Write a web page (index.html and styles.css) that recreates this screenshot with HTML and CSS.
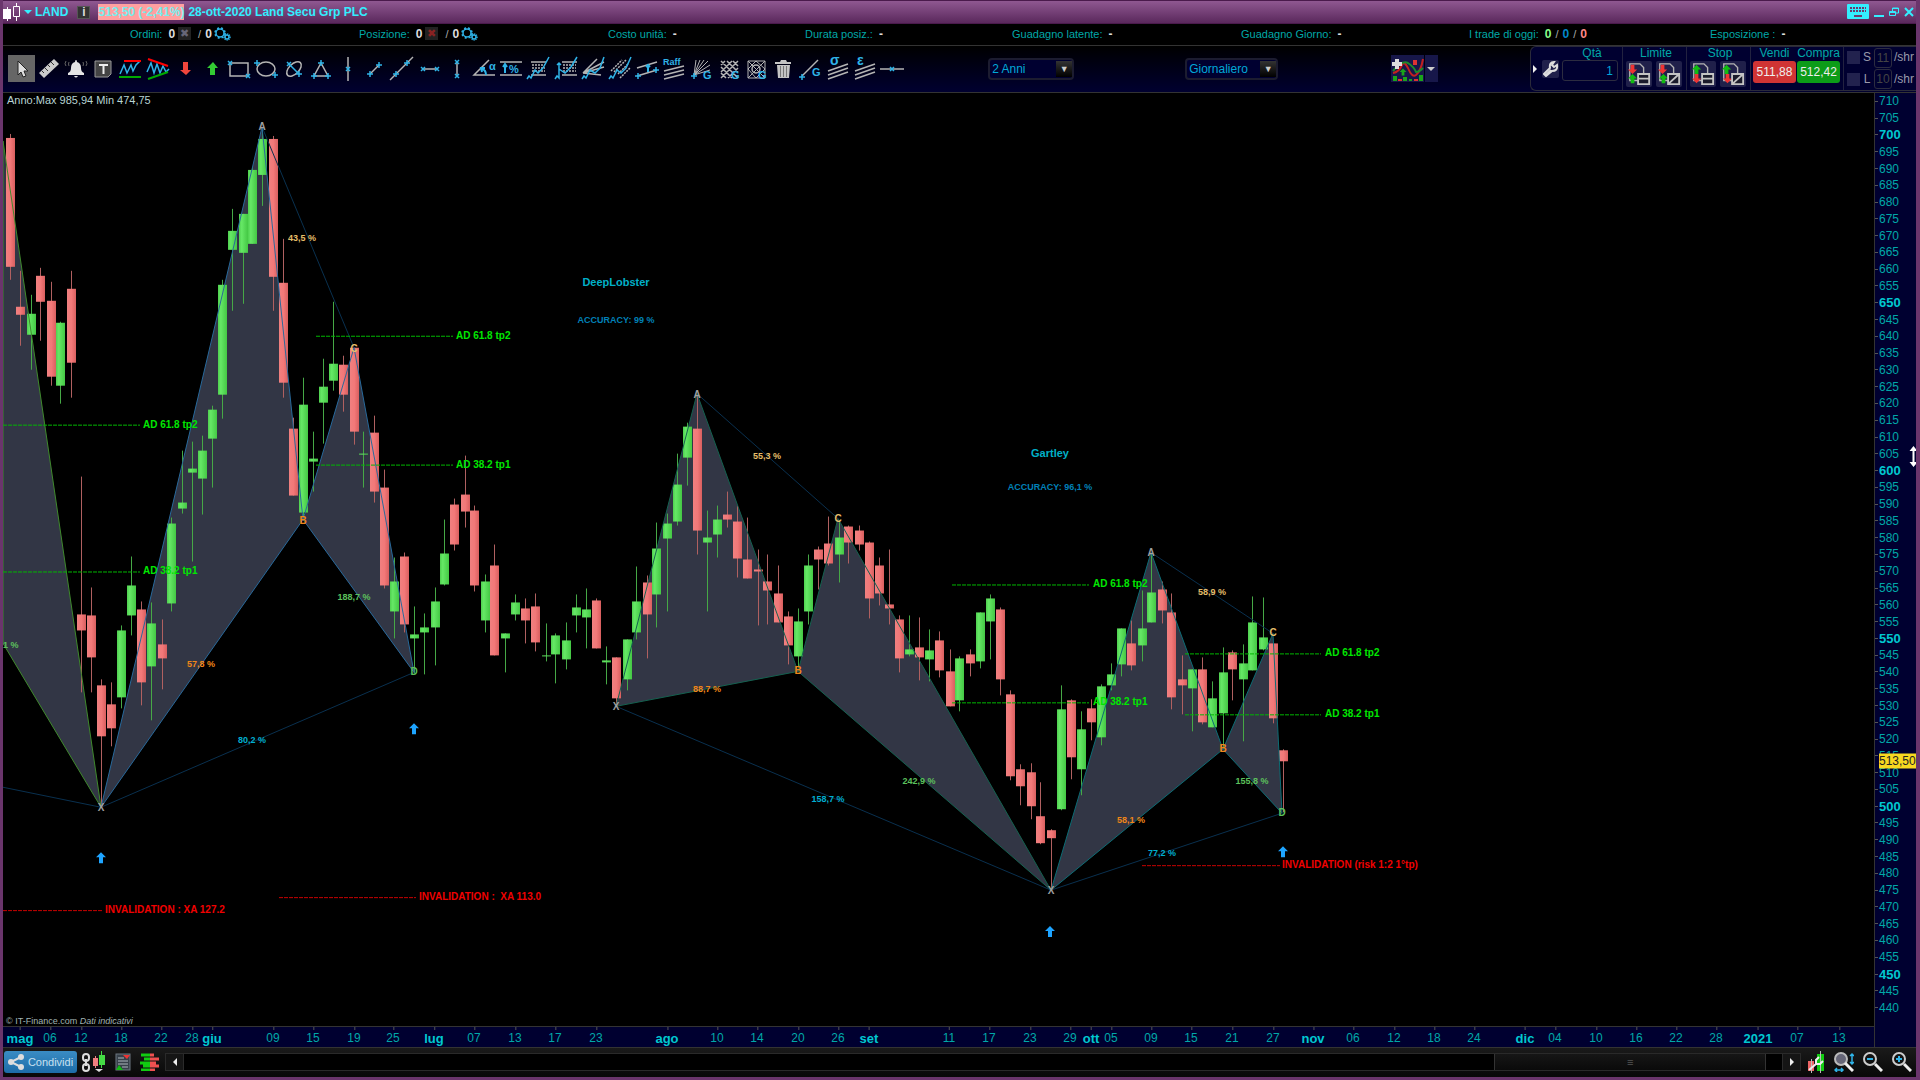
FILE: index.html
```html
<!DOCTYPE html>
<html lang="it">
<head>
    <meta charset="UTF-8">
    <meta name="viewport" content="width=device-width, initial-scale=1.0">
    <title>LAND - Land Secu Grp PLC</title>
    <link rel="stylesheet" href="styles.css">
</head>
<body>
    <!-- shared icon parts -->
    <svg class="defs" width="0" height="0" aria-hidden="true">
        <defs>
            <path id="plus" class="b" d="M-3 0h6M0-3v6"/>
            <path id="cross" class="b" d="M-2-2l4 4M2-2l-4 4"/>
            <path id="up" d="M0-5l5 5h-3v5h-4v-5h-3z"/>
            <path id="down" d="M0 5l5-5h-3v-5h-4v5h-3z"/>
            <g id="gears" class="b">
                <circle cx="6" cy="6" r="4"/>
                <circle cx="6" cy="6" r="5" stroke-dasharray="2 2"/>
                <circle cx="13" cy="10" r="2"/>
                <circle cx="13" cy="10" r="3" stroke-dasharray="1 1"/>
            </g>
            <g id="sheet">
                <path class="w" d="M3 2h11l4 4v14h-15z"/>
            </g>
        </defs>
    </svg>

    <header class="title-bar">
        <svg class="candle-logo" viewBox="0 0 18 18"><path fill="#fff" d="M0 6h8v10h-8zM4 4h1v14h-1z"/><path fill="none" stroke="#fff" d="M10.500 3.500h6v10h-6zM13.500 0v3M13.500 14v4"/></svg>
        <button class="symbol-menu"><i class="caret cyan"></i>LAND</button>
        <button class="info-btn" aria-label="Info">i</button>
        <span class="quote">513,50 (-2,41%)</span>
        <h1>28-ott-2020 Land Secu Grp PLC</h1>
        <div class="window-btns">
            <button aria-label="Tastiera"><svg width="22" height="16" viewBox="0 0 22 16"><rect width="22" height="15" rx="1" fill="#3ef"/><path stroke="#6b3a6e" stroke-width="2" stroke-dasharray="2 1" d="M3 4h16M3 7h16"/><path stroke="#6b3a6e" stroke-width="2" d="M7 12h8"/></svg></button>
            <button aria-label="Riduci"><svg width="10" height="12" viewBox="0 0 10 12"><path stroke="#3ef" stroke-width="2" d="M0 10h10"/></svg></button>
            <button aria-label="Ripristina"><svg width="10" height="12" viewBox="0 0 10 12"><path fill="none" stroke="#3ef" d="M3.500 5v-3h6v5h-3M.5 5.500h6v4h-6zM3 2.500h7M0 6.500h7"/></svg></button>
            <button aria-label="Chiudi"><svg width="10" height="12" viewBox="0 0 10 12"><path stroke="#3ef" stroke-width="2" d="M1 2l8 8M9 2l-8 8"/></svg></button>
        </div>
    </header>

    <section class="info-row">
        <div>Ordini: <b>0</b><button class="cancel" aria-label="Annulla ordini">✖</button> <em>/</em> <b>0</b><svg width="17" height="14"><use href="#gears"/></svg></div>
        <div>Posizione: <b>0</b><button class="cancel red" aria-label="Chiudi posizione">✖</button> <em>/</em> <b>0</b><svg width="17" height="14"><use href="#gears"/></svg></div>
        <div>Costo unità: <b>-</b></div>
        <div>Durata posiz.: <b>-</b></div>
        <div>Guadagno latente: <b>-</b></div>
        <div>Guadagno Giorno: <b>-</b></div>
        <div>I trade di oggi: <b class="win">0</b> <em>/</em> <b class="even">0</b> <em>/</em> <b class="lose">0</b></div>
        <div>Esposizione : <b>-</b></div>
    </section>

    <nav class="toolbar">
        <div class="tools">
            <button class="active" aria-label="Selezione"><svg viewBox="0 0 24 24"><path fill="#ddd" stroke="#222" d="M8 4v14l3-3 2 5 3-1-2-5h4z"/></svg></button>
            <button aria-label="Righello"><svg viewBox="0 0 24 24"><path fill="#ccc" d="M2 16l15-14 5 5-15 14z"/><path stroke="#333" d="M5 14l2 2M8 11l3 3M11 8l2 2M14 5l3 3"/></svg></button>
            <button aria-label="Allarme"><svg viewBox="0 0 24 24"><path fill="#e4e4e4" d="M12 3q1 0 1 2 4 1 4 6 0 4 3 5v2h-16v-2q3-1 3-5 0-5 4-6 0-2 1-2zM10 19h4q-2 3-4 0"/><path class="w thin dim" d="M5 5q-1 2 0 4M2 4q-2 3 0 5M19 5q1 2 0 4M22 4q2 3 0 5"/></svg></button>
            <button aria-label="Testo"><svg viewBox="0 0 24 24"><path fill="#444" stroke="#999" d="M4 4h16v13l-3 3h-13z"/><path stroke="#eee" stroke-width="2" fill="none" d="M8 8h9M12.500 8v9"/></svg></button>
            <button aria-label="Supporti"><svg viewBox="0 0 24 24"><path class="b" d="M2 17l4-9 3 8 4-8 2 6 3-6 4-4"/><path stroke="#f00" stroke-width="2" d="M6 4h17"/><path stroke="#0a0" stroke-width="2" d="M1 20h22"/></svg></button>
            <button aria-label="Canale"><svg viewBox="0 0 24 24"><path class="b" d="M1 15l4-9 3 10 3-9 3 9 3-7 3 6 3-3"/><path stroke="#f00" stroke-width="2" d="M2 2l20 7"/><path stroke="#0a0" stroke-width="2" d="M2 22l20-7"/></svg></button>
            <button aria-label="Freccia giù"><svg viewBox="0 0 24 24"><path fill="#f0453c" d="M10 5h5v8h3l-5 5-6-5h3z"/></svg></button>
            <button aria-label="Freccia su"><svg viewBox="0 0 24 24"><path fill="#3c3" d="M10 18h5v-7h3l-5-6-6 6h3z"/></svg></button>
            <button aria-label="Rettangolo"><svg viewBox="0 0 24 24"><path class="w" d="M3 6h18v13h-18z"/><use href="#cross" x="3" y="6"/><use href="#cross" x="21" y="19"/></svg></button>
            <button aria-label="Ellisse"><svg viewBox="0 0 24 24"><ellipse class="w" cx="12" cy="12" rx="9" ry="7"/><use href="#plus" x="3" y="6"/><use href="#plus" x="21" y="18"/></svg></button>
            <button aria-label="Ellisse inclinata"><svg viewBox="0 0 24 24"><ellipse class="w" cx="12" cy="12" rx="9" ry="5" transform="rotate(-45 12 12)"/><path class="b" d="M7 7l10 10"/><use href="#cross" x="7" y="7"/><use href="#plus" x="17" y="17"/></svg></button>
            <button aria-label="Triangolo"><svg viewBox="0 0 24 24"><path class="w" d="M12 6l7 13h-14z"/><use href="#plus" x="12" y="6"/><use href="#plus" x="5" y="19"/><use href="#plus" x="19" y="19"/></svg></button>
            <button aria-label="Verticale"><svg viewBox="0 0 24 24"><path class="w" d="M12 0v24"/><use href="#cross" x="12" y="12"/></svg></button>
            <button aria-label="Segmento"><svg viewBox="0 0 24 24"><path class="w" d="M7 17l9-9"/><use href="#plus" x="7" y="17"/><use href="#plus" x="16" y="8"/></svg></button>
            <button aria-label="Retta"><svg viewBox="0 0 24 24"><path class="w" d="M0 23l23-23"/><use href="#plus" x="6" y="17"/><use href="#plus" x="17" y="6"/></svg></button>
            <button aria-label="Segmento orizzontale"><svg viewBox="0 0 24 24"><path class="w" d="M5 12h14"/><use href="#cross" x="5" y="12"/><use href="#cross" x="19" y="12"/></svg></button>
            <button aria-label="Segmento verticale"><svg viewBox="0 0 24 24"><path class="w" d="M12 5v14"/><use href="#cross" x="12" y="5"/><use href="#cross" x="12" y="19"/></svg></button>
            <button aria-label="Angolo"><svg viewBox="0 0 24 24"><path class="w" d="M17 3l-15 15h21"/><path class="b bold" d="M14 18q0-5-4-6M10 15l-1-4 4 0"/><text x="17" y="13">α</text></svg></button>
            <button aria-label="Variazione %"><svg viewBox="0 0 24 24"><path class="w" d="M1 5h22M1 18h22"/><path class="b bold" d="M6 16v-8M4 10l2-3 2 3"/><text x="10" y="16">%</text></svg></button>
            <button aria-label="Ritracciamenti"><svg viewBox="0 0 24 24"><path class="w dots" d="M6 8h13M6 11h13M6 14h13"/><path class="w" d="M5 5h15M5 18h15"/><path class="b" d="M1 22l2-3 2 2 4-8 3 3 5-5 6-11"/></svg></button>
            <button aria-label="Estensioni"><svg viewBox="0 0 24 24"><path class="w dots" d="M9 8h13M9 11h13M9 14h13"/><path class="w" d="M8 5h15M8 18h15"/><path class="b" d="M1 22l2-3 2 2v-14M3 8l2-2 2 2M5 12l6 4 6-6 6-10"/></svg></button>
            <button aria-label="Ventaglio"><svg viewBox="0 0 24 24"><path class="w" d="M2 16l14-14M2 16l21-11M2 16l21-6M2 16l18 2"/><path class="b" d="M1 22l2-3 2 2 4-8 5 3 5-5 4-11"/></svg></button>
            <button aria-label="Linee di velocità"><svg viewBox="0 0 24 24"><path class="w dots" d="M3 14l11-11M6 15l12-12M10 17l10-10M12 21l10-10"/><path class="b" d="M1 22l2-3 2 2 4-8 4 3 5-5 5-11"/></svg></button>
            <button aria-label="Canale parallelo"><svg viewBox="0 0 24 24"><path class="w" d="M2 11l20-6M2 19l20-6"/><path class="b bold" d="M13 15v-6M11 10l2-2 2 2"/><use href="#plus" x="3" y="19"/><use href="#plus" x="21" y="13"/></svg></button>
            <button aria-label="Raff"><svg viewBox="0 0 24 24"><path class="w" d="M2 14l20-5M2 18l20-5M2 22l20-5"/><text class="raff" x="1" y="8">Raff</text></svg></button>
            <button aria-label="Ventaglio di Gann"><svg viewBox="0 0 24 24"><path class="w thin" d="M4 18l2-15M4 18l6-15M4 18l10-15M4 18l14-14M4 18l16-10M4 18l16-5"/><use href="#plus" x="4" y="19"/><text x="13" y="22">G</text></svg></button>
            <button aria-label="Griglia di Gann"><svg viewBox="0 0 24 24"><path class="w" d="M4 8l4-4M4 15l11-11M4 21l17-17M11 21l10-10M4 16l5 5M4 10l11 11M4 4l17 17M10 4l11 11M16 4l5 5"/><text x="14" y="22">G</text></svg></button>
            <button aria-label="Quadrato di Gann"><svg viewBox="0 0 24 24"><path class="w thin" d="M4 4h17v17h-17zM4 4l17 17M21 4l-17 17M12 4l9 8-9 9-8-9z"/><circle class="w" cx="12" cy="12" r="4"/><text x="14" y="22">G</text></svg></button>
            <button aria-label="Elimina"><svg viewBox="0 0 24 24"><path fill="#c4c4c4" d="M6 8h13l-1 13h-11zM4 5h5l1-2h5l1 2h4v2h-16z"/><path stroke="#777" d="M9.500 9v11M12.500 9v11M15.500 9v11"/></svg></button>
            <button aria-label="Linea di Gann"><svg viewBox="0 0 24 24"><path class="w" d="M4 19l16-16"/><use href="#plus" x="4" y="20"/><text x="14" y="19">G</text></svg></button>
            <button aria-label="Deviazione standard"><svg viewBox="0 0 24 24"><path class="w" d="M2 14l20-7M2 18l20-7M2 22l20-7"/><text class="greek" x="4" y="8">σ</text></svg></button>
            <button aria-label="Errore standard"><svg viewBox="0 0 24 24"><path class="w" d="M2 14l20-7M2 18l20-7M2 22l20-7"/><text class="greek" x="4" y="8">ε</text></svg></button>
            <button aria-label="Orizzontale"><svg viewBox="0 0 24 24"><path class="w" d="M0 12h24"/><use href="#cross" x="12" y="12"/></svg></button>
        </div>

        <div class="period"><select aria-label="Periodo"><option>2 Anni</option></select></div>
        <div class="period wide"><select aria-label="Intervallo"><option>Giornaliero</option></select></div>

        <div class="indicators">
            <button aria-label="Indicatori"><svg width="33" height="26" viewBox="0 0 33 26"><path fill="none" stroke="#c32020" stroke-width="2" d="M2 17q6-1 9-8 2-5 6 3 4 10 8 7 5-4 7-16"/><path fill="none" stroke="#1b8a2b" stroke-width="2" d="M2 15q9-11 15-8 6 4 8 9 3 0 7-4"/><path stroke="#ddd" stroke-width="4" d="M1 8h10M6 3v10"/><g fill="#1aa51a"><use href="#up" transform="translate(12 16) scale(.7)"/><path d="M2 20h4v5h-4zM12 21h4v4h-4zM18 23h3v2h-3zM28 19h4v6h-4z"/></g><path fill="#d33" d="M22 4h4v5h-4zM7 23h4v2h-4zM23 23h4v2h-4z"/></svg></button>
            <button class="drop" aria-label="Altri indicatori"><i class="caret"></i></button>
        </div>

        <form class="trade-panel">
            <i class="collapse"></i>
            <button type="button" class="tile wrench" aria-label="Impostazioni"><svg width="16" height="16" viewBox="0 0 16 16"><path fill="none" stroke="#ddd" stroke-width="2" d="M2 15l6-6M14 4l-3 2-2-2 2-3q-5 0-4 6l-6 6 2 2 6-5q6 0 5-6z"/></svg></button>
            <div class="col qty">
                <label for="qty">Qtà</label>
                <input id="qty" type="text" value="1">
            </div>
            <div class="col orders">
                <span>Limite</span>
                <div>
                    <button type="button" class="tile" aria-label="Limite"><svg viewBox="0 0 26 26"><use href="#sheet"/><use href="#down" x="6" y="8" fill="#e33"/><use href="#up" x="6" y="18" fill="#1b1"/><path class="box" d="M12 13h12v5h-12zM12 18h12v6h-12z"/></svg></button>
                    <button type="button" class="tile" aria-label="Limite avanzato"><svg viewBox="0 0 26 26"><use href="#sheet"/><use href="#down" x="6" y="8" fill="#e33"/><use href="#up" x="7" y="18" fill="#1b1"/><path class="box" d="M12 13h12v11h-12zM12 24l12-11"/></svg></button>
                </div>
            </div>
            <div class="col orders">
                <span>Stop</span>
                <div>
                    <button type="button" class="tile" aria-label="Stop"><svg viewBox="0 0 26 26"><use href="#sheet"/><use href="#up" x="6" y="8" fill="#1b1"/><use href="#down" x="6" y="18" fill="#e33"/><path class="box" d="M12 13h12v5h-12zM12 18h12v6h-12z"/></svg></button>
                    <button type="button" class="tile" aria-label="Stop avanzato"><svg viewBox="0 0 26 26"><use href="#sheet"/><use href="#up" x="6" y="8" fill="#1b1"/><use href="#down" x="7" y="18" fill="#e33"/><path class="box" d="M12 13h12v11h-12zM12 24l12-11"/></svg></button>
                </div>
            </div>
            <div class="col market">
                <div><span>Vendi</span><span>Compra</span></div>
                <div><button type="button" class="sell">511,88</button><button type="button" class="buy">512,42</button></div>
            </div>
            <div class="col shr">
                <div><input type="checkbox" id="chk-s"><label for="chk-s">S</label><input type="text" value="11" aria-label="S per azione">/shr</div>
                <div><input type="checkbox" id="chk-l"><label for="chk-l">L</label><input type="text" value="10" aria-label="L per azione">/shr</div>
            </div>
        </form>
    </nav>

    <main class="chart">
        <div class="plot" id="plot">
            <svg id="canvas" viewBox="3 92 1871 934" preserveAspectRatio="none">
                <defs>
                    <linearGradient id="bull"><stop offset="0" stop-color="#4fd04f"/><stop offset=".3" stop-color="#66e866"/><stop offset="1" stop-color="#44c844"/></linearGradient>
                    <linearGradient id="bear"><stop offset="0" stop-color="#f08080"/><stop offset=".5" stop-color="#f27878"/><stop offset="1" stop-color="#d95f5f"/></linearGradient>
                </defs>
            </svg>
            <p class="range">Anno:Max 985,94 Min 474,75</p>
            <p class="credits">© IT-Finance.com <i>Dati indicativi</i></p>
        </div>
        <div class="price-axis" id="price-axis">
            <span class="last-price">513,50</span>
            <svg class="resize" width="9" height="21" viewBox="0 0 9 21"><path fill="#fff" d="M4.500 0l4 5h-3v11h3l-4 5-4-5h3v-11h-3z"/></svg>
        </div>
        <div class="time-axis" id="time-axis"></div>
    </main>

    <footer class="bottom-bar">
        <button class="share"><svg width="16" height="16" viewBox="0 0 16 16"><path fill="none" stroke="#ddd" stroke-width="2" d="M13 3l-10 5 10 5"/><circle cx="13" cy="3" r="3" fill="#ddd"/><circle cx="3" cy="8" r="3" fill="#ddd"/><circle cx="13" cy="13" r="3" fill="#ddd"/></svg>Condividi</button>
        <button aria-label="Collega grafici"><svg width="25" height="22" viewBox="0 0 25 22"><g fill="none" stroke="#ddd" stroke-width="2"><rect x="2" y="3" width="6" height="7" rx="3"/><rect x="2" y="13" width="6" height="7" rx="3"/><path d="M5 8v7"/></g><path fill="#f08080" d="M12 7h5v8h-5zM14 5h1v12h-1z"/><path fill="#4d4" d="M18 4h6v10h-6zM20 0h1v17h-1z"/><path fill="#ddd" d="M14 18h8l-4 3z"/></svg></button>
        <button aria-label="Notizie"><svg width="16" height="18" viewBox="0 0 16 18"><rect x="1" y="1" width="14" height="16" fill="#374049" stroke="#6d7680"/><path stroke="#aeb6bd" stroke-width="1" d="M3 5h6M3 8h10M3 11h10M7 14h6"/><path fill="#e33" d="M8 2h7l-3 4z"/><path fill="#1b1" d="M1 17h7l-4-5z"/></svg></button>
        <button aria-label="Book"><svg width="19" height="18" viewBox="0 0 19 18"><path stroke="#1c1" stroke-width="3" d="M1 2h9M4 6h6M0 10h10M3 13h7M1 17h9"/><path stroke="#f05050" stroke-width="3" d="M10 2h4M10 6h9M10 10h6M10 13h9M10 17h5"/></svg></button>
        <div class="scroll">
            <button aria-label="Scorri a sinistra"><i class="arrow-l"></i></button>
            <div class="track"><div class="thumb">≡</div></div>
            <button aria-label="Scorri a destra"><i class="arrow-r"></i></button>
        </div>
        <button aria-label="Impostazioni grafico"><svg width="18" height="22" viewBox="0 0 18 22"><path fill="#e66" d="M1 10h6v10h-6z"/><path fill="#1c1" d="M10 3h7v17h-7z"/><path stroke="#bbb" d="M13.500 0v22M4.500 8v14"/><path fill="none" stroke="#eee" stroke-width="2" d="M2 19l7-6M12 6l-3 3v4h4l3-3"/></svg></button>
        <button aria-label="Adatta"><svg width="20" height="20" viewBox="0 0 20 20"><circle cx="7" cy="7" r="6" fill="#667" stroke="#bbb" stroke-width="2"/><path stroke="#eee" stroke-width="3" d="M11 11l8 8"/><path class="b" d="M18 2v10M16 4l2-2 2 2M16 10l2 2 2-2M1 18h8M3 16l-2 2 2 2M7 16l2 2-2 2"/></svg></button>
        <button aria-label="Riduci zoom"><svg width="20" height="20" viewBox="0 0 20 20"><circle cx="7" cy="7" r="6" fill="none" stroke="#ccc" stroke-width="2"/><path stroke="#eee" stroke-width="3" d="M12 12l7 7"/><path class="b bold" d="M4 7h6"/></svg></button>
        <button aria-label="Aumenta zoom"><svg width="20" height="20" viewBox="0 0 20 20"><circle cx="7" cy="7" r="6" fill="none" stroke="#ccc" stroke-width="2"/><path stroke="#eee" stroke-width="3" d="M12 12l7 7"/><path class="b bold" d="M4 7h6M7 4v6"/></svg></button>
    </footer>

    <script src="chart.js"></script>
</body>
</html>
```
FILE: styles.css
```css
:root {
    --navy: #000030;
    --teal: #00a8a8;
    --cyan: #00c8d0;
    --blue: #2fb4e8;
    --line: #333;
}

* {
    margin: 0;
    padding: 0;
    box-sizing: border-box;
    font-family: "Liberation Sans", Arial, sans-serif;
}

body {
    height: 100vh;
    display: flex;
    flex-direction: column;
    background: #000;
    border: solid #6a356c;
    border-width: 0 4px 3px 3px;
    color: var(--teal);
    font-size: 11px;
    overflow: hidden;
}

button {
    background: none;
    border: 0;
    color: inherit;
    font-size: inherit;
    display: flex;
    align-items: center;
    justify-content: center;
}

.defs { position: absolute; }

.b { fill: none; stroke: var(--blue); stroke-width: 1.5; }
.bold { stroke-width: 2; }
.w { fill: none; stroke: #b4b4b4; stroke-width: 1.5; }
.thin { stroke-width: 1; }
.dim { stroke: #666; }
.dots { stroke-dasharray: 2 1; }
.box { fill: #1b1b2b; stroke: #c4c4c4; stroke-width: 2; }

.caret {
    border: 4px solid transparent;
    border-top-color: #ccc;
    border-bottom: 0;
}
.caret.cyan { border-top-color: #3ef; }

/* title bar */
.title-bar {
    flex: 0 0 24px;
    display: flex;
    align-items: center;
    background: linear-gradient(#8f5891, #5a285c);
    border-top: 1px solid #4a1a4c;
    border-bottom: 1px solid #4a1a4c;
    color: #3ef;
    font-size: 12px;
}
.candle-logo { width: 18px; height: 18px; }
.symbol-menu {
    gap: 3px;
    margin-left: 3px;
    font-weight: bold;
}
.info-btn {
    width: 13px;
    height: 13px;
    margin: 0 8px 0 9px;
    background: #333;
    border: 1px solid #555;
    color: #ddd;
    font-weight: bold;
}
.quote {
    margin-right: 4px;
    line-height: 16px;
    background: #ffa0a0;
    font-weight: bold;
    color: #7ee;
}
.title-bar h1 { font-size: 12px; }
.window-btns {
    margin-left: auto;
    display: flex;
    align-items: center;
    gap: 5px;
    padding-right: 2px;
}

/* account info */
.info-row {
    flex: 0 0 22px;
    display: grid;
    grid-template-columns: 229fr 249fr 197fr 207fr 229fr 228fr 241fr 206fr;
    align-items: center;
    padding: 0 0 2px 127px;
    border-bottom: 1px solid var(--line);
}
.info-row div {
    display: flex;
    align-items: center;
    gap: 6px;
    white-space: nowrap;
}
.info-row b { color: #ddd; font-size: 12px; }
.info-row em { color: #aaa; font-style: normal; }
.info-row em + b, .info-row em { margin-left: -2px; }
.info-row svg { margin-left: -4px; }
.info-row .win { color: #8f8; }
.info-row .even { color: #08c; }
.info-row .lose { color: #f88; }
.cancel {
    width: 13px;
    height: 13px;
    margin: 0 3px 0 -3px;
    background: #222;
    color: #667;
}
.cancel.red { color: #822; }

/* drawing toolbar */
.toolbar {
    flex: 0 0 46px;
    display: flex;
    align-items: center;
    padding-bottom: 1px;
    background: linear-gradient(#000, var(--navy));
    border-bottom: 1px solid var(--line);
}
.tools {
    flex: 0 0 47.2%;
    display: flex;
    padding-left: 5px;
}
.tools button { flex: 1; height: 27px; }
.tools .active { background: #666; }
.tools svg { width: 24px; height: 24px; overflow: visible; }
.tools text { fill: var(--blue); font-size: 11px; font-weight: bold; }
.tools text.raff { font-size: 9px; }
.tools text.greek { font-size: 14px; }

.period {
    width: 86px;
    margin-left: 4.3%;
    position: relative;
}
.period.wide { width: 93px; margin-left: 5.8%; }
.period select {
    appearance: none;
    width: 100%;
    height: 22px;
    padding-left: 2px;
    background: var(--navy);
    border: 2px solid #1c1c30;
    border-radius: 4px;
    color: #00a8d8;
    font-size: 12px;
}
.period::after {
    content: "▼";
    position: absolute;
    right: 2px;
    top: 3px;
    width: 16px;
    height: 16px;
    background: linear-gradient(#333, #000);
    color: #ccc;
    font-size: 9px;
    line-height: 16px;
    text-align: center;
    pointer-events: none;
}

.indicators {
    display: flex;
    gap: 1px;
    margin-left: 5.9%;
}
.indicators button { background: #17174a; height: 27px; }
.indicators .drop { width: 13px; }

.trade-panel {
    width: 386px;
    height: 45px;
    margin-left: auto;
    display: flex;
    align-items: stretch;
    background: var(--navy);
    border: 1px solid #2a2a3a;
    border-right: 0;
    border-radius: 6px 0 0 6px;
    color: var(--teal);
    font-size: 12px;
}
.collapse {
    align-self: center;
    border: 4px solid transparent;
    border-left-color: #eee;
    border-right: 0;
    margin: 0 5px 0 2px;
}
.tile {
    width: 26px;
    height: 26px;
    background: #20204a;
    border-radius: 2px;
}
.tile svg { width: 24px; height: 24px; }
.wrench { width: 17px; height: 18px; align-self: center; }
.wrench svg { width: 16px; height: 16px; }
.col {
    display: flex;
    flex-direction: column;
    text-align: center;
    line-height: 13px;
    border-right: 1px solid #222240;
}
.col > div { display: flex; gap: 4px; }
.col input[type=text] {
    background: transparent;
    border: 1px solid #2c2c40;
    border-radius: 3px;
    color: #00a8d8;
    font-size: 12px;
}
.qty { width: 64px; padding-left: 3px; }
.qty input { width: 56px; height: 21px; padding-right: 4px; text-align: right; }
.orders { width: 64px; padding-left: 3px; }
.orders div, .market div + div { padding-top: 1px; }
.market { width: 93px; padding-left: 2px; }
.market div { gap: 1px; }
.market span, .market button { width: 43px; }
.market button { height: 22px; border-radius: 3px; color: #eee; }
.sell { background: #d03434; }
.buy { background: #0c9c18; }
.shr { flex: 1; border: 0; color: #99a; }
.shr > div { flex: 1; align-items: center; gap: 2px; padding-left: 3px; }
.shr input[type=checkbox] { appearance: none; width: 13px; height: 13px; background: #22224e; }
.shr label { width: 10px; }
.col.shr input[type=text] { width: 18px; height: 20px; color: #444; text-align: center; }

/* chart */
.chart {
    flex: 1;
    min-height: 0;
    display: grid;
    grid-template: minmax(0, 1fr) 21px / minmax(0, 1fr) 42px;
}
.plot { position: relative; overflow: hidden; }
#canvas { display: block; width: 100%; height: 100%; }
.range {
    position: absolute;
    left: 4px;
    top: 0;
    color: #b8d4d4;
    line-height: 14px;
}
.credits {
    position: absolute;
    left: 3px;
    bottom: 0;
    color: #a0b4b4;
    font-size: 9px;
    line-height: 10px;
}

.shape { fill: #323645; }
.leg { fill: none; stroke-width: 1; }
.thin-leg { stroke: #09304f; fill: none; }
.tp { stroke: #00b800; stroke-dasharray: 4 1; }
.stop { stroke: #c80000; stroke-dasharray: 4 1; }
.signal { fill: #1ea4ff; }

.mark {
    position: absolute;
    transform: translateY(-50%);
    font-size: 10px;
    font-weight: bold;
    line-height: 12px;
    white-space: pre;
}
.mark.mid { transform: translate(-50%, -50%); }
.mark.big { font-size: 11px; color: #00b0c8; }
.mark.acc { font-size: 9px; color: #0080b8; }
.mark.tp-text { color: #00e800; }
.mark.stop-text { color: #f00000; }
.mark.pct { font-size: 9px; }
.gold { color: #e6be6a; }
.green { color: #5cc05c; }
.orange { color: #f08618; }
.aqua { color: #00aed0; }
.grey { color: #a0a0a0; }

.price-axis {
    grid-row: 1 / 3;
    grid-column: 2;
    position: relative;
    display: flex;
    flex-direction: column;
    padding-bottom: 31px;
    background: var(--navy);
    border-left: 1px solid var(--line);
    font-size: 12px;
}
.tick {
    flex: 1;
    min-height: 0;
    display: flex;
    align-items: center;
    gap: 1px;
}
.tick::before { content: ""; width: 3px; height: 1px; background: #555; }
.tick.major, .date.major { font-size: 13px; font-weight: bold; color: var(--cyan); }
.last-price {
    position: absolute;
    left: 4px;
    right: 0;
    transform: translateY(-50%);
    line-height: 15px;
    background: #f8d820;
    color: #222;
}
.resize { position: absolute; right: -2px; top: 37%; }

.time-axis {
    grid-row: 2;
    grid-column: 1;
    position: relative;
    background: var(--navy);
    border-top: 1px solid var(--line);
    font-size: 12px;
}
.date {
    position: absolute;
    top: 0;
    padding-top: 4px;
    line-height: 15px;
    transform: translateX(-50%);
}
.date::before {
    content: "";
    position: absolute;
    left: 50%;
    top: 0;
    width: 1px;
    height: 3px;
    background: #555;
}

/* bottom bar */
.bottom-bar {
    flex: 0 0 30px;
    display: flex;
    align-items: center;
    gap: 9px;
    padding: 0 4px 2px 1px;
    background: linear-gradient(#1a1a1a, #080808);
    border-top: 1px solid var(--line);
}
.share {
    width: 73px;
    height: 22px;
    gap: 4px;
    margin-right: -5px;
    background: linear-gradient(#3a8cc4, #1c6ca8);
    border-radius: 3px;
    color: #c8e0f0;
}
.bottom-bar svg { display: block; }
.scroll {
    flex: 1;
    display: flex;
    height: 18px;
    margin: 0 -3px;
    border: 1px solid #2a2a2a;
}
.scroll button { width: 17px; background: #151515; }
.arrow-l, .arrow-r { border: 4px solid transparent; }
.arrow-l { border-right-color: #eee; border-left: 0; }
.arrow-r { border-left-color: #eee; border-right: 0; }
.track { flex: 1; background: #000; border: solid #2a2a2a; border-width: 0 1px; }
.thumb {
    width: 17%;
    height: 16px;
    margin-left: 82%;
    background: linear-gradient(#161616, #0a0a0a);
    border: solid #333;
    border-width: 0 1px;
    color: #555;
    line-height: 16px;
    text-align: center;
}
```
FILE: chart.js
```js
const NS = 'http://www.w3.org/2000/svg';
const VIEW = { x: 3, y: 92, w: 1871, h: 934 };
const canvas = document.getElementById('canvas');
const plot = document.getElementById('plot');

// x, high, body top, body bottom, low, up (1) or down (0)
const candles = [
    [10,133,137,266,279,0],[20,270,306,314,345,0],[31,294,313,334,369,1],[40,267,275,301,340,0],[51,281,300,376,385,0],
    [60,321,322,385,403,1],[71,270,288,362,397,0],[81,476,614,630,692,0],[91,587,615,657,692,0],[101,679,685,736,807,0],
    [111,682,704,728,746,0],[121,625,630,697,708,1],[131,556,585,615,635,1],[141,601,609,682,705,0],[151,602,623,666,720,1],
    [162,619,644,658,689,0],[171,517,523,603,611,1],[182,450,502,508,513,1],[192,441,468,472,561,1],[202,435,450,478,514,1],
    [212,405,409,438,487,1],[222,279,284,394,418,1],[232,208,230,249,310,1],[243,213,213,252,303,1],[252,166,169,243,243,1],
    [262,126,138,174,205,1],[273,135,138,276,310,0],[283,238,282,382,397,0],[293,417,428,495,495,0],[303,377,404,512,517,1],
    [313,431,458,461,491,1],[323,358,386,402,443,1],[333,301,363,380,390,1],[343,355,364,394,411,0],[354,347,347,431,444,0],
    [363,431,453,454,487,1],[374,415,432,491,502,0],[384,469,487,585,588,0],[394,557,581,611,638,1],[404,552,556,624,632,0],
    [414,606,634,638,673,1],[424,613,627,632,674,1],[435,587,601,627,665,1],[444,519,553,584,585,1],[454,498,504,544,550,0],
    [465,455,494,511,527,0],[474,505,510,585,591,0],[485,574,581,620,632,1],[494,544,565,655,655,0],[505,633,633,638,672,1],
    [515,594,602,614,620,1],[525,598,608,620,643,0],[535,593,606,642,651,0],[546,623,655,656,661,1],[555,633,635,654,683,1],
    [566,622,640,659,669,1],[576,594,607,615,632,1],[586,588,609,617,648,1],[596,598,600,648,648,0],[606,646,660,662,684,1],
    [616,657,657,698,705,0],[627,639,639,679,690,1],[636,566,601,632,639,1],[647,575,582,614,658,0],[656,522,548,594,627,1],
    [667,513,523,538,611,1],[677,453,484,521,525,1],[687,422,426,457,485,1],[697,395,428,530,554,0],[707,510,537,542,611,1],
    [717,505,519,534,557,1],[727,491,514,519,527,0],[737,505,521,558,577,0],[747,517,559,578,578,0],[758,549,569,571,625,0],
    [767,554,581,590,624,0],[778,565,593,622,622,0],[788,611,616,645,664,0],[798,608,621,656,667,1],[808,554,565,611,624,1],
    [818,546,549,559,589,0],[828,516,543,563,565,0],[839,520,537,554,582,1],[848,525,526,542,563,0],[859,525,530,544,550,0],
    [869,541,542,598,618,0],[879,557,565,593,605,0],[889,549,604,608,624,0],[899,615,619,658,672,0],[909,615,649,654,656,1],
    [919,617,647,657,680,0],[929,629,650,659,681,1],[939,631,640,670,677,0],[950,649,671,706,706,0],[959,656,658,700,711,1],
    [970,649,654,663,676,0],[980,612,612,661,668,1],[990,594,598,621,659,1],[1000,607,609,679,695,0],[1010,690,694,776,780,0],
    [1020,764,769,786,805,0],[1031,763,772,806,819,0],[1040,782,816,843,844,0],[1051,829,830,838,889,0],[1061,685,709,809,810,1],
    [1071,699,700,757,779,0],[1081,711,729,769,795,1],[1091,699,708,722,740,0],[1101,684,686,737,745,1],[1111,663,674,685,690,1],
    [1121,628,628,664,676,1],[1131,620,643,665,670,0],[1142,590,628,645,661,1],[1151,553,592,622,622,1],[1162,581,589,610,623,0],
    [1171,593,612,697,709,0],[1182,655,679,685,714,0],[1192,669,669,688,731,1],[1202,657,669,722,724,0],[1212,681,698,727,727,1],
    [1223,647,672,713,747,1],[1232,650,652,669,700,0],[1243,644,663,679,741,1],[1252,596,622,670,670,1],[1263,597,637,649,650,1],
    [1273,643,643,718,723,0],[1283,749,750,761,812,0]
];

const patterns = [
    { color: '#3f8a2c', points: '3,140 101,807 3,643' },
    { color: '#28699c', points: '101,807 262,126 303,519 354,347 414,672 303,519' },
    { color: '#14614f', points: '616,706 697,393 798,671 838,518 1051,890 798,671' },
    { color: '#0c6c74', points: '1051,890 1151,552 1223,749 1273,633 1282,813 1223,749' }
];

const thinLegs = [
    '3,787 101,807 414,672', '262,126 354,347', '697,393 838,518',
    '616,706 1051,890 1282,813', '1151,552 1273,633'
];

// x1, x2, y
const targets = [
    [3,140,424],[3,140,571],[316,453,335],[316,453,464],
    [952,1089,584],[952,1089,702],[1185,1321,653],[1185,1321,714]
];
const stops = [[3,102,910],[279,416,897],[1142,1280,865]];
const signals = [[101,858],[414,729],[1050,932],[1283,852]];

// text, x, y, classes
const marks = [
    ['AD 61.8 tp2',143,424,'tp-text'],['AD 38.2 tp1',143,571,'tp-text'],
    ['AD 61.8 tp2',456,335,'tp-text'],['AD 38.2 tp1',456,464,'tp-text'],
    ['AD 61.8 tp2',1093,584,'tp-text'],['AD 38.2 tp1',1093,702,'tp-text'],
    ['AD 61.8 tp2',1325,653,'tp-text'],['AD 38.2 tp1',1325,714,'tp-text'],
    ['INVALIDATION : XA 127.2',105,910,'stop-text'],['INVALIDATION :  XA 113.0',419,897,'stop-text'],
    ['INVALIDATION (risk 1:2 1°tp)',1282,865,'stop-text'],
    ['DeepLobster',616,281,'mid big'],['ACCURACY: 99 %',616,319,'mid acc'],
    ['Gartley',1050,452,'mid big'],['ACCURACY: 96,1 %',1050,486,'mid acc'],
    ['43,5 %',302,237,'mid pct gold'],['188,7 %',354,597,'mid pct green'],['57,8 %',201,664,'mid pct orange'],
    ['80,2 %',252,740,'mid pct aqua'],['1 %',3,645,'pct green'],['55,3 %',767,455,'mid pct gold'],
    ['88,7 %',707,689,'mid pct orange'],['242,9 %',919,781,'mid pct green'],['158,7 %',828,799,'mid pct aqua'],
    ['58,9 %',1212,592,'mid pct gold'],['58,1 %',1131,820,'mid pct orange'],['77,2 %',1162,853,'mid pct aqua'],
    ['155,8 %',1252,781,'mid pct green'],
    ['A',262,126,'mid grey'],['B',303,520,'mid orange'],['C',354,348,'mid gold'],['D',414,672,'mid green'],
    ['X',101,808,'mid grey'],['X',616,707,'mid grey'],['A',697,394,'mid grey'],['B',798,671,'mid orange'],
    ['C',838,518,'mid gold'],['X',1051,891,'mid grey'],['A',1151,552,'mid grey'],['B',1223,749,'mid orange'],
    ['C',1273,633,'mid gold'],['D',1282,813,'mid green']
];

const dates = [
    ['mag',20],['06',50],['12',81],['18',121],['22',161],['28',192],['giu',212],['09',273],['15',313],['19',354],
    ['25',393],['lug',434],['07',474],['13',515],['17',555],['23',596],['ago',667],['10',717],['14',757],['20',798],
    ['26',838],['set',869],['11',949],['17',989],['23',1030],['29',1070],['ott',1091],['05',1111],['09',1151],['15',1191],
    ['21',1232],['27',1273],['nov',1313],['06',1353],['12',1394],['18',1434],['24',1474],['dic',1525],['04',1555],
    ['10',1596],['16',1636],['22',1676],['28',1716],['2021',1758],['07',1797],['13',1839]
];

function draw(tag, attrs) {
    const el = document.createElementNS(NS, tag);
    for (const key in attrs) el.setAttribute(key, attrs[key]);
    canvas.appendChild(el);
}

function addText(parent, text, className) {
    const el = document.createElement('span');
    el.textContent = text;
    el.className = className;
    parent.appendChild(el);
    return el;
}

const left = x => `${(x - VIEW.x) / VIEW.w * 100}%`;
const top_ = y => `${(y - VIEW.y) / VIEW.h * 100}%`;

patterns.forEach(p => draw('polygon', { class: 'shape', points: p.points }));

candles.forEach(([x, high, top, bottom, low, up]) => {
    draw('rect', { x: x, y: high, width: 1, height: low - high, fill: up ? '#46a846' : '#b06060' });
    draw('rect', { x: x - 4, y: top, width: 9, height: Math.max(bottom - top, 1), fill: up ? 'url(#bull)' : 'url(#bear)' });
});

thinLegs.forEach(points => draw('polyline', { class: 'thin-leg', points }));
patterns.forEach(p => draw('polygon', { class: 'leg', points: p.points, stroke: p.color }));
targets.forEach(([x1, x2, y]) => draw('path', { class: 'tp', d: `M${x1} ${y + 0.5}H${x2}` }));
stops.forEach(([x1, x2, y]) => draw('path', { class: 'stop', d: `M${x1} ${y + 0.5}H${x2}` }));
signals.forEach(([x, y]) => draw('path', { class: 'signal', d: `M${x} ${y - 6}l5 5h-3v6h-4v-6h-3z` }));

marks.forEach(([text, x, y, cls]) => {
    const el = addText(plot, text, `mark ${cls}`);
    el.style.left = left(x);
    el.style.top = top_(y);
});

// price scale
const priceAxis = document.getElementById('price-axis');
for (let price = 710; price >= 440; price -= 5) {
    addText(priceAxis, price, price % 50 === 0 ? 'tick major' : 'tick');
}
document.querySelector('.last-price').style.top = `${(761 - VIEW.y) / 955 * 100}%`;

// time scale
const timeAxis = document.getElementById('time-axis');
dates.forEach(([text, x]) => {
    const el = addText(timeAxis, text, isNaN(text) || text === '2021' ? 'date major' : 'date');
    el.style.left = left(x);
});
```
